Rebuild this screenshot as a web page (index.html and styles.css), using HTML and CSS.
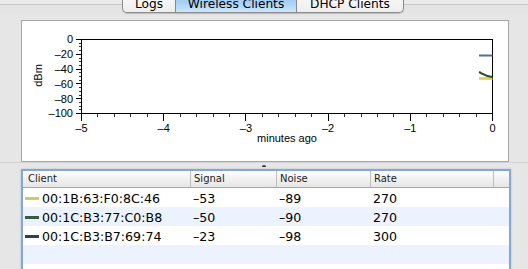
FILE: index.html
```html
<html>
<head>
	<link rel="stylesheet" href="styles.css">
</head>
<body>
	<div class="tabbar">
		<div class="tabs">
			<div class="tab logs"><span>Logs</span></div>
			<div class="tab wireless selected"><span>Wireless Clients</span></div>
			<div class="tab dhcp"><span>DHCP Clients</span></div>
		</div>
	</div>

	<div class="chart">
		<svg width="486" height="140" viewBox="22 21 486 140">
			<g class="axis">
				<!-- y ticks, 0 to -100 dBm -->
				<path class="minor" d="M78.5 43.2H81.5M78.5 46.9H81.5M78.5 50.6H81.5M78.5 58H81.5M78.5 61.7H81.5M78.5 65.4H81.5M78.5 72.8H81.5M78.5 76.5H81.5M78.5 80.2H81.5M78.5 87.6H81.5M78.5 91.3H81.5M78.5 95H81.5M78.5 102.4H81.5M78.5 106.1H81.5M78.5 109.8H81.5"/>
				<path d="M76 39.5H81.5M76 54.3H81.5M76 69.1H81.5M76 83.9H81.5M76 98.7H81.5M76 113.5H81.5"/>
				<!-- x ticks, -5 to 0 minutes -->
				<path class="minor" d="M97.9 113.5V117M114.4 113.5V117M130.8 113.5V117M147.3 113.5V117M180.1 113.5V117M196.6 113.5V117M213 113.5V117M229.5 113.5V117M262.3 113.5V117M278.8 113.5V117M295.2 113.5V117M311.7 113.5V117M344.5 113.5V117M361 113.5V117M377.4 113.5V117M393.9 113.5V117M426.7 113.5V117M443.2 113.5V117M459.6 113.5V117M476.1 113.5V117"/>
				<path d="M81.5 113.5V121M163.7 113.5V121M245.9 113.5V121M328.1 113.5V121M410.3 113.5V121M492.5 113.5V121"/>
				<rect x="81.5" y="39.5" width="411" height="74"/>
			</g>
			<g class="ylabels">
				<text x="73" y="43.4">0</text>
				<text x="73" y="58.2">–20</text>
				<text x="73" y="73">–40</text>
				<text x="73" y="87.8">–60</text>
				<text x="73" y="102.6">–80</text>
				<text x="73" y="117.4">–100</text>
			</g>
			<g class="xlabels">
				<text x="81.5" y="132">–5</text>
				<text x="163.7" y="132">–4</text>
				<text x="245.9" y="132">–3</text>
				<text x="328.1" y="132">–2</text>
				<text x="410.3" y="132">–1</text>
				<text x="492.5" y="132">0</text>
				<text x="287" y="142">minutes ago</text>
			</g>
			<text class="unit" transform="translate(41.5 75.5) rotate(-90)">dBm</text>
			<path class="series yellow" d="M479 78.5H492.5"/>
			<path class="series green" d="M479 72C483 74 486 76.5 492.5 77"/>
			<path class="series blue" d="M479 55.5H492.5"/>
		</svg>
	</div>

	<div class="splitter"><span class="dimple"></span></div>

	<div class="clients">
		<div class="row head">
			<div class="cell">Client</div>
			<div class="cell">Signal</div>
			<div class="cell">Noise</div>
			<div class="cell">Rate</div>
			<div class="cell"></div>
		</div>
		<div class="row">
			<div class="cell name"><span class="swatch yellow"></span>00:1B:63:F0:8C:46</div>
			<div class="cell">–53</div>
			<div class="cell">–89</div>
			<div class="cell">270</div>
			<div class="cell"></div>
		</div>
		<div class="row alt">
			<div class="cell name"><span class="swatch green"></span>00:1C:B3:77:C0:B8</div>
			<div class="cell">–50</div>
			<div class="cell">–90</div>
			<div class="cell">270</div>
			<div class="cell"></div>
		</div>
		<div class="row">
			<div class="cell name"><span class="swatch blue"></span>00:1C:B3:B7:69:74</div>
			<div class="cell">–23</div>
			<div class="cell">–98</div>
			<div class="cell">300</div>
			<div class="cell"></div>
		</div>
		<div class="row alt empty"></div>
		<div class="row empty"></div>
	</div>
</body>
</html>
```

FILE: styles.css
```css
body { margin:0; width:528px; height:269px; overflow:hidden; background-color:#e6e6e6; font-family:"DejaVu Sans", sans-serif; color:#000; }

.tabbar { height:13px; background:linear-gradient(#ebebeb 0 4px, #c6c6c6 4px 5px, #e4e4e4 5px); }
.tabs { display:flex; justify-content:center; margin-left:-2px; }
.tab { height:22px; margin-top:-9px; display:flex; align-items:flex-end; justify-content:center; box-sizing:border-box; border:1px solid #8c8c8c; border-top:none; border-left:none; background:linear-gradient(#fdfdfd, #ededed); box-shadow:0 1px 1px rgba(0,0,0,0.18); font-size:12.2px; }
.tab span { line-height:1; padding-bottom:2px; }
.tab.logs { width:54px; border-left:1px solid #8c8c8c; border-bottom-left-radius:5px; }
.tab.wireless { width:121px; }
.tab.dhcp { width:107px; border-bottom-right-radius:5px; }
.tab.selected { background:linear-gradient(#8fc4f2, #a9d3f7 60%, #cfe6fb); }

.chart { margin:7px 0 0 21px; width:488px; height:142px; box-sizing:border-box; background:#fff; border:1px solid #a8a8a8; }
.chart svg { display:block; }
.axis path, .axis rect { fill:none; stroke:#000; stroke-width:1; shape-rendering:crispEdges; }
.axis path.minor { stroke:#333; }
.ylabels text { font:11px "Liberation Sans", sans-serif; text-anchor:end; }
.xlabels text { font:11px "Liberation Sans", sans-serif; text-anchor:middle; }
.unit { font:11px "Liberation Sans", sans-serif; text-anchor:middle; }
.series { fill:none; stroke-width:2; }
.series.yellow { stroke:#d9cf4c; stroke-width:2.5; }
.series.green { stroke:#2f4a1f; }
.series.blue { stroke:#4f6f9a; }

.splitter { height:7px; display:flex; justify-content:center; border-top:1px solid #d2d2d2; box-sizing:border-box; }
.dimple { width:4px; height:2px; margin:2px 0 0 -1px; background:#333; border-radius:2px 2px 0 0; }

.clients { margin-left:21px; width:490px; height:100px; box-sizing:border-box; background:#fff; border:2px solid #86a6d8; border-bottom:none; box-shadow:0 0 2px #a9c2e8; }
.row { display:grid; grid-template-columns:167px 86px 94px 123px 1fr; height:19px; line-height:19px; font-size:12.6px; }
.row.alt { background:#edf3fe; }
.row .cell { padding-left:3px; padding-top:1px; white-space:nowrap; }
.row .name { display:flex; align-items:center; padding-left:2px; }
.row.head { height:17px; line-height:16px; font-size:10px; color:#222; background:linear-gradient(#fefefe, #f1f1f1 50%, #e6e6e6); border-bottom:1px solid #a9a9a9; box-sizing:border-box; }
.row.head .cell { padding-left:3px; padding-top:0; border-left:1px solid #bdbdbd; }
.row.head .cell:first-child { padding-left:5px; border-left:none; }
.swatch { width:14px; height:2.5px; margin-right:3px; }
.swatch.yellow { background:#d6c95a; }
.swatch.green { background:#3b5a44; }
.swatch.blue { background:#2c3f5e; }
```
